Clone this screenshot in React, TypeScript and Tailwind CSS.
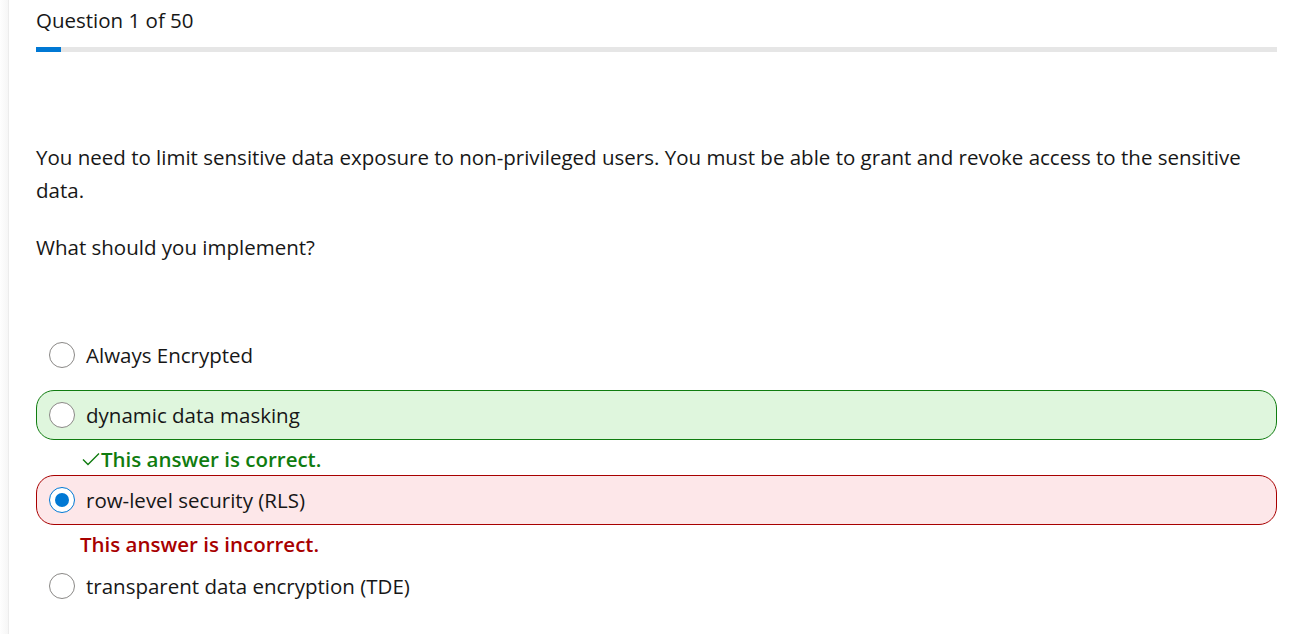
import React from 'react'

type Option = {
  label: string
  selected?: boolean
  state?: 'correct' | 'incorrect'
}

const options: Option[] = [
  { label: 'Always Encrypted' },
  { label: 'dynamic data masking', state: 'correct' },
  { label: 'row-level security (RLS)', selected: true, state: 'incorrect' },
  { label: 'transparent data encryption (TDE)' },
]

function Radio({ selected }: { selected?: boolean }) {
  if (selected) {
    return (
      <span className="flex h-[26px] w-[26px] shrink-0 items-center justify-center rounded-full border border-[#0078d4] bg-white">
        <span className="h-[14px] w-[14px] rounded-full bg-[#0078d4]" />
      </span>
    )
  }
  return <span className="h-[26px] w-[26px] shrink-0 rounded-full border border-[#8a8886] bg-white" />
}

function CheckIcon() {
  return (
    <svg width="18" height="14" viewBox="0 0 18 14" fill="none" className="mr-[1px]">
      <path d="M1 7.5 L6 12.5 L17 1.5" stroke="#107c10" strokeWidth="1.4" />
    </svg>
  )
}

function OptionRow({ option }: { option: Option }) {
  const box =
    option.state === 'correct'
      ? 'border-[#107c10] bg-[#dff6dd]'
      : option.state === 'incorrect'
        ? 'border-[#a80000] bg-[#fde7e9]'
        : 'border-transparent bg-white'

  return (
    <div>
      <div className={`flex h-[50px] items-center gap-[11px] rounded-[18px] border pl-[12px] ${box}`}>
        <Radio selected={option.selected} />
        <span className="text-[20.5px] text-[#171717]">{option.label}</span>
      </div>
      {option.state === 'correct' && (
        <div className="flex h-[35px] items-start pl-[46px] pt-[5px] text-[20.5px] leading-[28px] font-semibold text-[#107c10]">
          <span className="flex h-[28px] items-center">
            <CheckIcon />
          </span>
          This answer is correct.
        </div>
      )}
      {option.state === 'incorrect' && (
        <div className="h-[36px] pl-[44px] pt-[5px] text-[20.5px] leading-[28px] font-semibold text-[#a80000]">
          This answer is incorrect.
        </div>
      )}
    </div>
  )
}

export default function App() {
  return (
    <main
      className="flex min-h-screen bg-white text-[#171717]"
      style={{ fontFamily: '"Segoe UI", "Open Sans", sans-serif' }}
    >
      <div className="w-[9px] shrink-0 border-r border-[#ececec] bg-gradient-to-r from-[#fefefe] to-[#f6f6f6]" />
      <div className="flex-1 pl-[27px] pr-[18px]">
        <div className="pt-[5px] text-[20.5px] leading-[30px]">Question 1 of 50</div>
        <div className="mt-[12px] h-[5px] w-full bg-[#e6e6e6]">
          <div className="h-full w-[2%] bg-[#0078d4]" />
        </div>

        <p className="mt-[89px] text-[20.5px] leading-[33px]">
          You need to limit sensitive data exposure to non-privileged users. You must be able to grant and
          revoke access to the sensitive data.
        </p>
        <p className="mt-[24px] text-[20.5px] leading-[33px]">What should you implement?</p>

        <div className="mt-[66px] flex flex-col">
          <div className="mb-[10px]">
            <OptionRow option={options[0]} />
          </div>
          <OptionRow option={options[1]} />
          <OptionRow option={options[2]} />
          <OptionRow option={options[3]} />
        </div>
      </div>
    </main>
  )
}
